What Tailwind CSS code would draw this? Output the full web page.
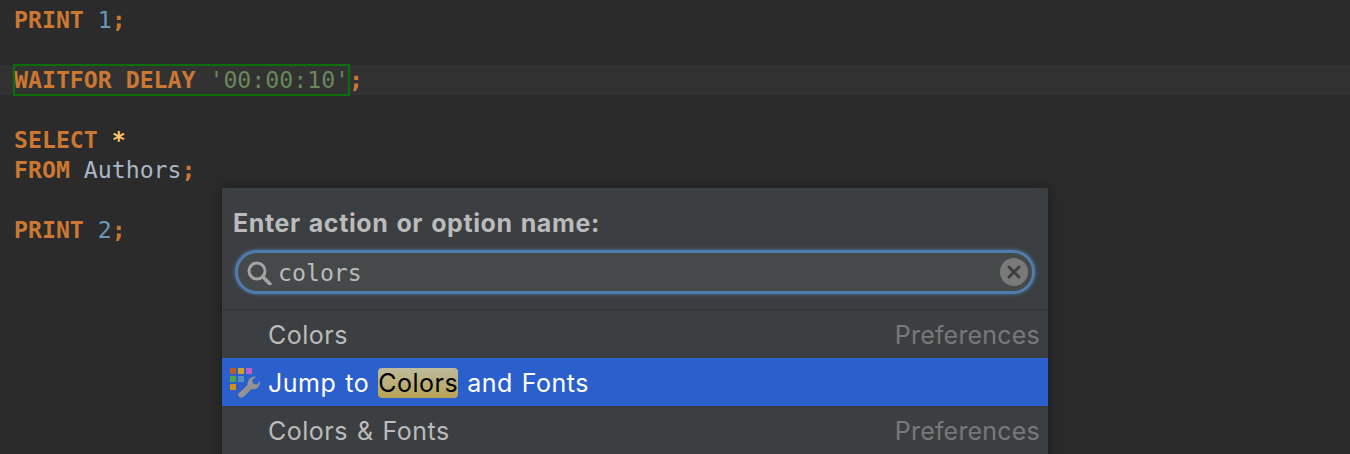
<!DOCTYPE html>
<html lang="en">
<head>
    <meta charset="UTF-8">
    <title>Find Action</title>
    <script src="https://cdn.jsdelivr.net/npm/@tailwindcss/browser@4"></script>
</head>
<body class="bg-[#2b2b2b]">
    <div class="relative w-[1350px] h-[454px] overflow-hidden">
        <!-- Editor -->
        <div class="pt-[5px] font-['DejaVu_Sans_Mono',monospace] text-[23.2px] leading-[30px] text-[#cc7832] font-bold">
            <div class="pl-[14px] h-[30px]">PRINT <span class="text-[#6897bb] font-normal">1</span>;</div>
            <div class="h-[30px]"></div>
            <div class="pl-[14px] h-[30px] bg-[#323232] flex">
                <span class="outline-2 outline-[#0b6e0b] -outline-offset-1 h-[30px] whitespace-pre">WAITFOR DELAY <span class="text-[#6a8759] font-normal">'00:00:10'</span></span><span>;</span>
            </div>
            <div class="h-[30px]"></div>
            <div class="pl-[14px] h-[30px]">SELECT <span class="text-[#ffc66d]">*</span></div>
            <div class="pl-[14px] h-[30px]">FROM <span class="text-[#a9b7c6] font-normal">Authors</span>;</div>
            <div class="h-[30px]"></div>
            <div class="pl-[14px] h-[30px]">PRINT <span class="text-[#6897bb] font-normal">2</span>;</div>
        </div>

        <!-- Find Action popup -->
        <div class="absolute left-[222px] top-[188px] w-[826px] h-[280px] bg-[#3c3f41] shadow-[0_0_14px_rgba(0,0,0,0.35)] font-['Inter',sans-serif]">
            <div class="h-[122px] border-b border-[#333537] px-[11px] pt-[20px]">
                <div class="text-[25px] leading-[30px] font-bold text-[#bbbbbb] tracking-[0.6px] [word-spacing:1.5px]">Enter action or option name:</div>
                <div class="mt-[12px] mx-[2px] h-[44px] rounded-full border-[3px] border-[#4f7cac] shadow-[0_0_3px_1px_rgba(79,124,172,0.6)] bg-[#45494a] flex items-center pl-[9px] pr-[3px]">
                    <svg class="w-[26px] h-[26px] shrink-0" viewBox="0 0 26 26" fill="none" stroke="#a3a3a3">
                        <circle cx="10" cy="12" r="8" stroke-width="3"/>
                        <path d="M16 18l7 7" stroke-width="3.5" stroke-linecap="round"/>
                    </svg>
                    <span class="ml-[5px] mt-[3px] font-['DejaVu_Sans_Mono',monospace] text-[23.2px] text-[#bbbbbb]">colors</span>
                    <svg class="ml-auto w-[30px] h-[30px] shrink-0" viewBox="0 0 30 30">
                        <circle cx="15" cy="15" r="14" fill="#7a7a7a"/>
                        <path d="M10 10l10 10M20 10l-10 10" stroke="#3c3f41" stroke-width="3" stroke-linecap="round"/>
                    </svg>
                </div>
            </div>
            <div class="h-[48px] pt-[3px] flex items-center justify-between pl-[46px] pr-[8px] text-[25px] tracking-[0.5px] [word-spacing:1.5px]">
                <span class="text-[#bbbbbb]">Colors</span>
                <span class="text-[#787878] tracking-[0.2px]">Preferences</span>
            </div>
            <div class="relative h-[48px] pt-[3px] flex items-center pl-[46px] pr-[8px] text-[25px] tracking-[0.5px] [word-spacing:1.5px] bg-[#2b5fcc] text-white">
                <svg class="absolute left-[7px] top-[9px] w-[32px] h-[32px]" viewBox="0 0 32 32">
                    <rect x="1" y="1" width="6" height="6" fill="#b85a24"/>
                    <rect x="9" y="1" width="6" height="6" fill="#cfa32a"/>
                    <rect x="17" y="1" width="6" height="6" fill="#bc5fc4"/>
                    <rect x="1" y="9" width="6" height="6" fill="#4ea64e"/>
                    <rect x="9" y="9" width="6" height="6" fill="#5a8fbd"/>
                    <rect x="1" y="17" width="6" height="6" fill="#d68f10"/>
                    <path d="M10 26L18.5 18C18 13 22 9 27 9.5L23 13.5L24.5 17L28 17.5L31 14C32 19 27 23.5 22.5 22L15 29.5C13.5 31 11 31 10 29.5C8.5 28 9 27 10 26Z" fill="#939393"/>
                </svg>
                <span>Jump to <span class="rounded-[4px] text-black bg-linear-to-b from-[#bdbb9c] to-[#b8a252]">Colors</span> and Fonts</span>
            </div>
            <div class="h-[48px] pt-[3px] flex items-center justify-between pl-[46px] pr-[8px] text-[25px] tracking-[0.5px] [word-spacing:1.5px]">
                <span class="text-[#bbbbbb]">Colors &amp; Fonts</span>
                <span class="text-[#787878] tracking-[0.2px]">Preferences</span>
            </div>
        </div>
    </div>
</body>
</html>
